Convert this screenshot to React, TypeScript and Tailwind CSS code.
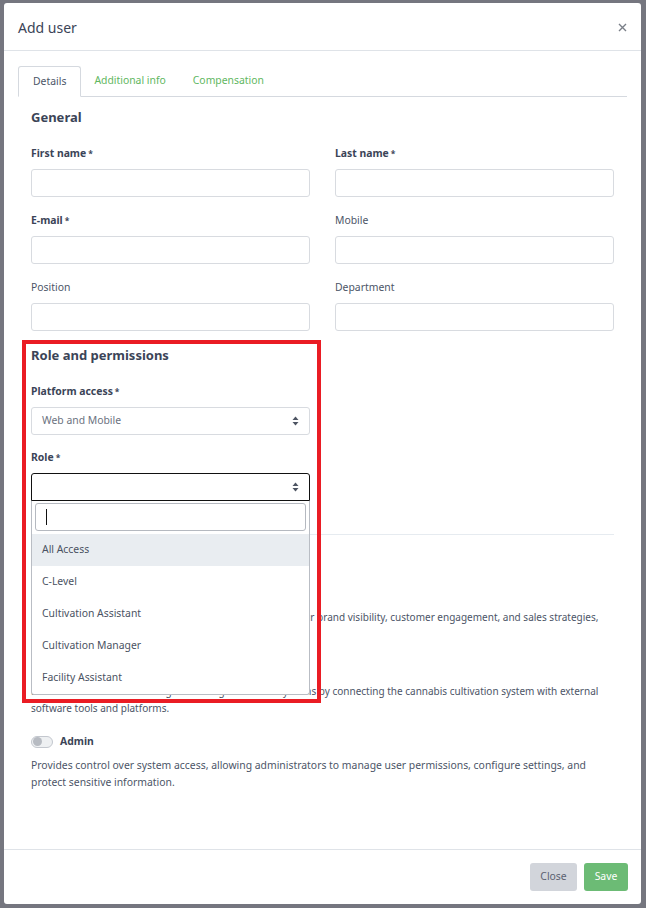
import type React from "react"

const labelBold = "block h-[17px] leading-[17px] text-[10.4px] font-bold text-[#3b4457] mb-[7px]"
const labelNormal = "block h-[17px] leading-[17px] text-[10.4px] text-[#4c5567] mb-[7px]"
const inputCls = "block w-full h-[28px] rounded-[3px] border border-[#d8dbe0] bg-white"

function Field({ label, required }: { label: string; required?: boolean }) {
  return (
    <div>
      <label className={required ? labelBold : labelNormal}>
        {label}
        {required && <span className="text-[8.5px] align-top ml-[2px]">*</span>}
      </label>
      <div className={inputCls} />
    </div>
  )
}

function Arrows() {
  return (
    <svg width="7" height="10" viewBox="0 0 7 10" className="absolute right-[10px] top-1/2 -translate-y-1/2">
      <path d="M3.5 0.5 L6.5 4 L0.5 4 Z" fill="#4d5462" />
      <path d="M3.5 9.5 L6.5 6 L0.5 6 Z" fill="#4d5462" />
    </svg>
  )
}

function Toggle({ label, small, children }: { label: string; small?: boolean; children: React.ReactNode }) {
  return (
    <div>
      <div className="flex items-center gap-[7px] h-[17px]">
        <div className="w-[22px] h-[12px] rounded-full border border-[#c3c7ce] bg-[#eef0f2] flex items-center px-[1px]">
          <div className="w-[9px] h-[9px] rounded-full bg-[#b7bbc2]" />
        </div>
        <span className="text-[10.4px] font-bold text-[#3b4457] leading-[17px]">{label}</span>
      </div>
      <p className={`mt-[7px] leading-[17px] text-[#4c5567] ${small ? "text-[10px]" : "text-[10.4px]"}`}>{children}</p>
    </div>
  )
}

const roles = ["All Access", "C-Level", "Cultivation Assistant", "Cultivation Manager", "Facility Assistant"]

export default function App() {
  return (
    <div className="relative min-h-screen bg-[#75767f] pt-[3px] pl-[4px] font-['Noto_Sans',sans-serif]">
      <div className="w-[637px] h-[901px] bg-white rounded-[3px] flex flex-col">
        <div className="h-[48px] flex items-center justify-between pl-[14px] pr-[14px] pt-[2px] border-b border-[#dfe3e8]">
          <h1 className="text-[14px] text-[#3b4457]">Add user</h1>
          <svg width="9" height="9" viewBox="0 0 9 9">
            <path d="M1 1 L8 8 M8 1 L1 8" stroke="#7a7f88" strokeWidth="1.4" />
          </svg>
        </div>

        <div className="flex-1 px-[14px] pt-[15px]">
          <div className="flex h-[31px] border-b border-[#d5d9df] text-[10.4px]">
            <div className="h-[31px] -mb-px px-[14px] flex items-center border border-[#d5d9df] border-b-white rounded-t-[3px] bg-white text-[#4c5567]">
              Details
            </div>
            <div className="pl-[13px] pr-[14px] flex items-center text-[#5fb761]">Additional info</div>
            <div className="px-[13px] flex items-center text-[#5fb761]">Compensation</div>
          </div>

          <div className="px-[13px]">
            <h2 className="mt-[12px] text-[13px] leading-[17px] font-bold text-[#3b4457]">General</h2>
            <div className="mt-[19px] grid grid-cols-2 gap-x-[25px] gap-y-[15px]">
              <Field label="First name" required />
              <Field label="Last name" required />
              <Field label="E-mail" required />
              <Field label="Mobile" />
              <Field label="Position" />
              <Field label="Department" />
            </div>

            <h2 className="mt-[16px] text-[13px] leading-[17px] font-bold text-[#3b4457]">Role and permissions</h2>
            <div className="w-[279px]">
              <div className="mt-[19px]">
                <label className={labelBold}>
                  Platform access<span className="text-[8.5px] align-top ml-[2px]">*</span>
                </label>
                <div className={`${inputCls} relative flex items-center pl-[10px] text-[10.4px] text-[#6b7280]`}>
                  Web and Mobile
                  <Arrows />
                </div>
              </div>
              <div className="mt-[14px] relative">
                <label className={labelBold}>
                  Role<span className="text-[8.5px] align-top ml-[2px]">*</span>
                </label>
                <div className="relative h-[28px] rounded-t-[3px] border border-[#111] bg-white">
                  <Arrows />
                </div>
                <div className="absolute left-0 right-0 top-[52px] z-10 bg-white border-x border-b border-[#b9bdc4] rounded-b-[3px] pt-[2px]">
                  <div className="mx-[3px] h-[28px] rounded-[3px] border border-[#b5b9c0] flex items-center pl-[10px]">
                    <div className="w-px h-[16px] bg-[#111]" />
                  </div>
                  <div className="mt-[3px]">
                    {roles.map((r, i) => (
                      <div
                        key={r}
                        className={`h-[32px] flex items-center pl-[10px] text-[10.4px] text-[#4a5262] ${i === 0 ? "bg-[#e9edf1]" : ""}`}
                      >
                        {r}
                      </div>
                    ))}
                  </div>
                </div>
              </div>
            </div>

            <div className="mt-[33px] border-t border-[#e6ebf0]" />
            <h2 className="mt-[16px] text-[13px] leading-[17px] font-bold text-[#3b4457]">Permissions</h2>
            <div className="mt-[17px] flex flex-col gap-[16px]">
              <Toggle label="Marketing" small>
                <span className="whitespace-nowrap">
                  Grants access to marketing tools that help you improve your brand visibility, customer engagement, and sales strategies,
                </span>
                <br />
                and campaign results.
              </Toggle>
              <Toggle label="Integrations" small>
                <span className="whitespace-nowrap">
                  Enables smooth data exchange and integration with systems by connecting the cannabis cultivation system with external
                </span>
                <br />
                software tools and platforms.
              </Toggle>
              <Toggle label="Admin">
                Provides control over system access, allowing administrators to manage user permissions, configure settings, and
                protect sensitive information.
              </Toggle>
            </div>
          </div>
        </div>

        <div className="h-[55px] border-t border-[#dfe3e8] flex items-center justify-end gap-[7px] pr-[13px]">
          <button className="w-[47px] h-[28px] rounded-[3px] bg-[#d2d5db] text-[10.4px] text-[#5b6270]">Close</button>
          <button className="w-[44px] h-[28px] rounded-[3px] bg-[#6cbb75] text-[10.4px] text-white">Save</button>
        </div>
      </div>

      <div className="absolute left-[22px] top-[340px] w-[299px] h-[363px] border-[4px] border-[#ea1c24] z-20 pointer-events-none" />
    </div>
  )
}
